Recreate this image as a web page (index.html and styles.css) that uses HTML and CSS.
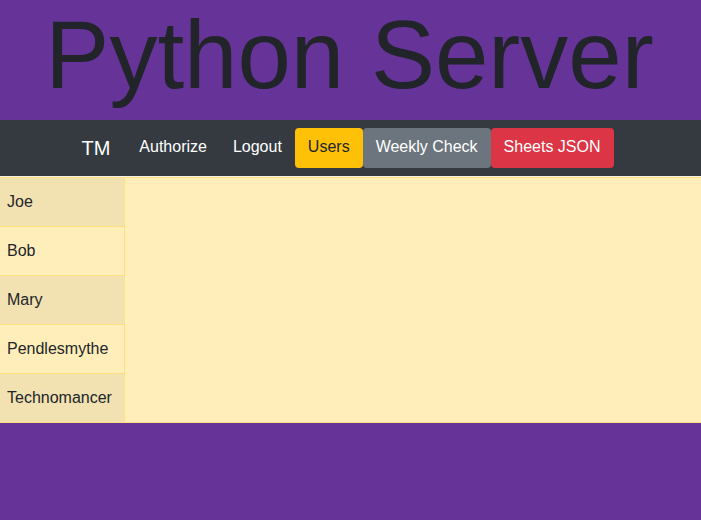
FILE: index.html
```html
<!DOCTYPE html>
<html>
<head>
<meta charset="utf-8">
<link rel="stylesheet" href="styles.css">
</head>
<body>
<header class="hero">
  <h1 class="title">Python Server</h1>
</header>
<nav class="navbar">
  <span class="brand">TM</span>
  <a class="nav-link">Authorize</a>
  <a class="nav-link">Logout</a>
  <a class="nav-link btn btn-warning">Users</a>
  <a class="nav-link btn btn-secondary">Weekly Check</a>
  <a class="nav-link btn btn-danger">Sheets JSON</a>
</nav>
<main class="content">
  <ul class="user-list">
    <li class="user odd">Joe</li>
    <li class="user">Bob</li>
    <li class="user odd">Mary</li>
    <li class="user">Pendlesmythe</li>
    <li class="user odd">Technomancer</li>
  </ul>
  <section class="detail"></section>
</main>
</body>
</html>
```
FILE: styles.css
```css
html, body {
  margin: 0;
  padding: 0;
}
body {
  background: #663399;
  font-family: "Liberation Sans", Arial, sans-serif;
  font-size: 16px;
  line-height: 1.5;
  color: #212529;
}
.hero {
  height: 120px;
  padding-right: 2px;
}
.title {
  margin: 0;
  font-size: 96px;
  font-weight: normal;
  line-height: 110px;
  text-align: center;
  color: #212529;
}
.navbar {
  background: #343a40;
  height: 56px;
  box-sizing: border-box;
  padding: 8px 22px 8px 16px;
  display: flex;
  justify-content: center;
  align-items: center;
}
.brand {
  color: #fff;
  font-size: 20px;
  line-height: 30px;
  padding: 5px 0;
  margin-right: 16px;
}
.nav-link {
  color: #fff;
  padding: 7px 13px 9px;
  line-height: 24px;
  display: block;
}
.btn {
  border-radius: 4px;
}
.btn-warning {
  background: #ffc107;
  color: #212529;
}
.btn-secondary {
  background: #6c757d;
  color: #fff;
}
.btn-danger {
  background: #dc3545;
  color: #fff;
}
.content {
  display: flex;
  background: #ffeeba;
  border-top: 1px solid #f3eee6;
  border-bottom: 1px solid #ffdf7e;
}
.user-list {
  list-style: none;
  margin: 0;
  padding: 0;
  width: 124px;
  border-right: 1px solid #ffdf7e;
}
.user {
  border-top: 1px solid #ffdf7e;
  padding: 12px 7px;
  line-height: 24px;
  background: #ffeeba;
  white-space: nowrap;
}
.user.odd {
  background: #f2e2b1;
}
.detail {
  flex: 1;
  border-top: 1px solid #ffdf7e;
}
```
